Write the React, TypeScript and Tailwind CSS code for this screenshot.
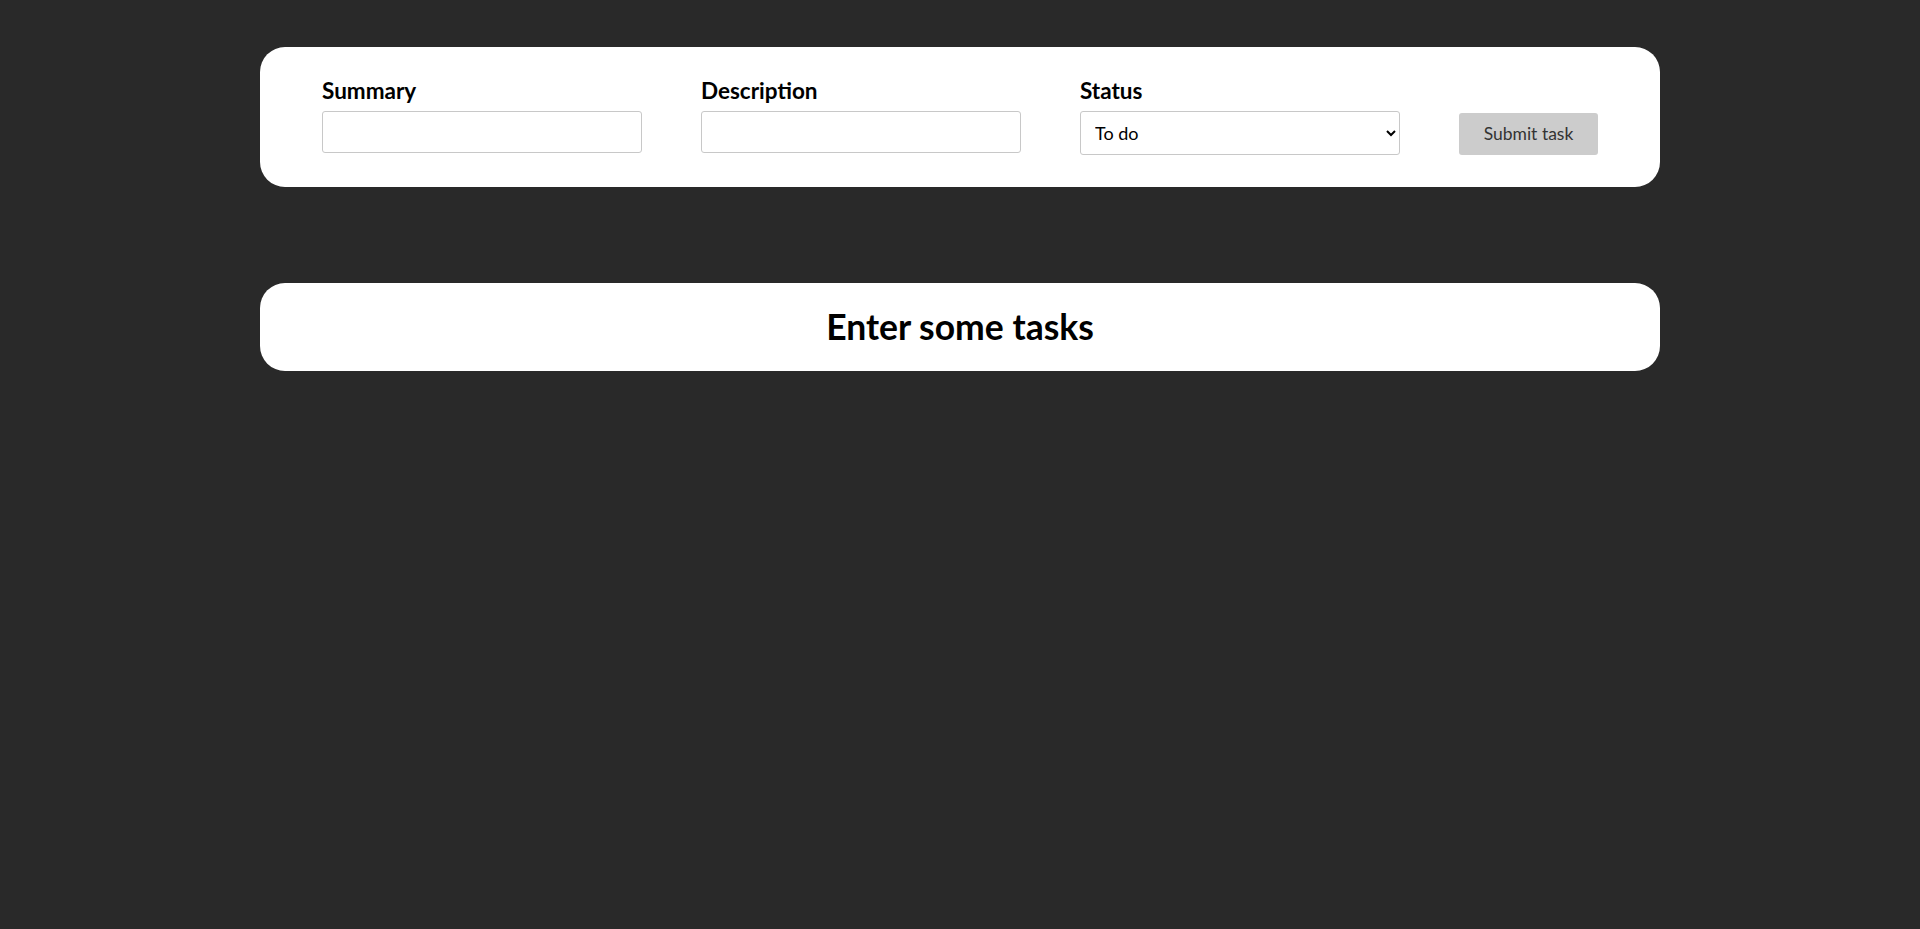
import React from "react";

export default function App() {
  const font = { fontFamily: '"Lato", "Noto Sans", sans-serif' };
  return (
    <div className="min-h-[929px] w-full bg-[#292929]" style={font}>
      <div className="mx-auto w-[1400px] pt-[47px]">
        <div className="flex h-[140px] items-end justify-between rounded-[25px] bg-white px-[62px] pb-[32px]">
          <div className="flex flex-col pb-[2px]">
            <label className="mb-[7px] text-[22.5px] font-bold leading-[26px] text-black">Summary</label>
            <input className="h-[42px] w-[320px] rounded-[3px] border border-[#c8c8c8] bg-white px-2 outline-none" />
          </div>
          <div className="flex flex-col pb-[2px]">
            <label className="mb-[7px] text-[22.5px] font-bold leading-[26px] text-black">Description</label>
            <input className="h-[42px] w-[320px] rounded-[3px] border border-[#c8c8c8] bg-white px-2 outline-none" />
          </div>
          <div className="flex flex-col">
            <label className="mb-[7px] text-[22.5px] font-bold leading-[26px] text-black">Status</label>
            <select className="h-[44px] w-[320px] rounded-[3px] border border-[#c8c8c8] bg-white pl-[10px] pr-1 text-[18px] text-black outline-none" defaultValue="todo">
              <option value="todo">To do</option>
              <option value="progress">In progress</option>
              <option value="done">Done</option>
            </select>
          </div>
          <button className="h-[42px] w-[139px] rounded-[3px] bg-[#cccccc] text-[17.5px] text-[#333333]">
            Submit task
          </button>
        </div>
        <div className="mt-[96px] flex h-[88px] items-center justify-center rounded-[25px] bg-white">
          <h1 className="text-[35.5px] font-bold text-black">Enter some tasks</h1>
        </div>
      </div>
    </div>
  );
}
